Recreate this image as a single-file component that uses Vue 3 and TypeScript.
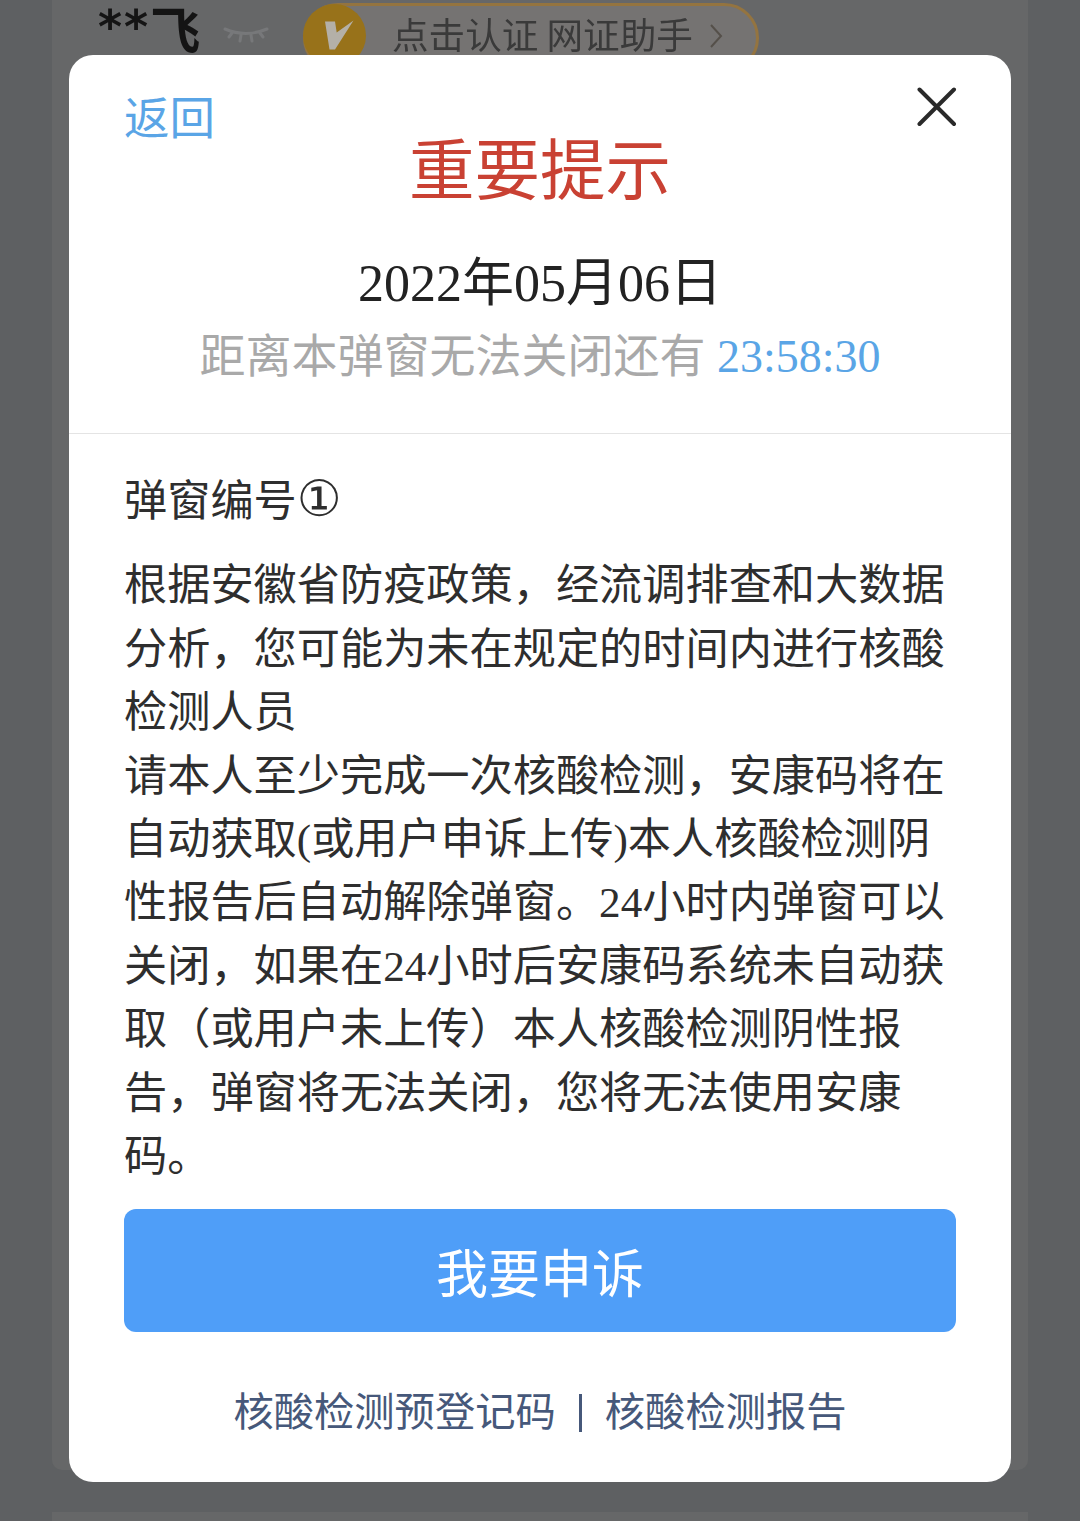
<script setup lang="ts">
const paragraphs: string[] = [
  '根据安徽省防疫政策，经流调排查和大数据分析，您可能为未在规定的时间内进行核酸检测人员',
  '请本人至少完成一次核酸检测，安康码将在自动获取(或用户申诉上传)本人核酸检测阴性报告后自动解除弹窗。24小时内弹窗可以关闭，如果在24小时后安康码系统未自动获取（或用户未上传）本人核酸检测阴性报告，弹窗将无法关闭，您将无法使用安康码。',
]
</script>

<template>
  <div class="page">
    <div class="panel">
      <div class="topbar">
        <span class="name"><span class="stars">**</span><span class="fei">飞</span></span>
        <svg class="eye" width="46" height="18" viewBox="0 0 46 18" fill="none" stroke="#77787a" stroke-width="3" stroke-linecap="round">
          <path d="M2 4 Q23 13 44 4" />
          <path d="M9 8 L6 12 M18 10 L17 16 M28 10 L29 16 M37 8 L40 12" />
        </svg>
        <div class="auth">
          <span class="badge">
            <svg width="63" height="63" viewBox="303 3 63 63">
              <path d="M325 20.5 L335 20.5 L336.7 31.5 L353.5 19.5 L335 48.5 L329.5 48.5 Z" fill="#b4b0a8" />
            </svg>
          </span>
          <span class="auth-text">点击认证 网证助手</span>
          <svg class="chev" width="14" height="26" viewBox="0 0 14 26" fill="none" stroke="#55504a" stroke-width="2">
            <path d="M2 2 L12 13 L2 24" />
          </svg>
        </div>
      </div>

      <div class="card">
        <div class="head">
          <a class="back">返回</a>
          <svg class="close" width="40" height="40" viewBox="0 0 40 40" fill="none" stroke="#2a2a2a" stroke-width="4" stroke-linecap="round">
            <path d="M2.5 2.5 L37 37 M37 2.5 L2.5 37" />
          </svg>
          <h1 class="title">重要提示</h1>
          <div class="date">2022年05月06日</div>
          <div class="count">距离本弹窗无法关闭还有 <span class="time">23:58:30</span></div>
        </div>

        <div class="body">
          <div class="code">弹窗编号<span class="num">①</span></div>
          <p v-for="(text, i) in paragraphs" :key="i" class="para">{{ text }}</p>
          <button class="appeal" type="button">我要申诉</button>
          <div class="links">
            <a class="link">核酸检测预登记码</a>
            <span class="sep"></span>
            <a class="link">核酸检测报告</a>
          </div>
        </div>
      </div>
      <div class="strip"></div>
    </div>
  </div>
</template>

<style>
html, body { margin: 0; background: #5e6062; }
</style>

<style scoped>
.page {
  width: 1080px;
  height: 1521px;
  overflow: hidden;
  background: #5e6062;
  font-family: "Liberation Serif", "Noto Sans CJK SC", sans-serif;
  display: flex;
  justify-content: center;
  align-items: flex-start;
}
.panel {
  width: 976px;
  height: 1470px;
  background: #666768;
  padding: 0 17px;
  box-sizing: border-box;
  border-radius: 0 0 10px 10px;
}
.topbar {
  height: 55px;
  display: flex;
  align-items: flex-start;
  padding-left: 29px;
  filter: blur(0.6px);
}
.name {
  color: #141414;
  width: 126px;
  height: 55px;
  flex: none;
  white-space: nowrap;
  display: flex;
  align-items: flex-start;
}
.stars {
  font-family: "DejaVu Sans", sans-serif;
  font-weight: 700;
  font-size: 46px;
  line-height: 46px;
  margin-top: 4px;
  letter-spacing: 2px;
}
.fei {
  font-family: "Noto Sans CJK SC", sans-serif;
  font-weight: 700;
  font-size: 50px;
  line-height: 54px;
}
.eye { margin: 25px 0 0 -1px; flex: none; }
.auth {
  flex: none;
  margin: 3px 0 0 34px;
  width: 456px;
  height: 70px;
  box-sizing: border-box;
  border: 3px solid #947440;
  border-radius: 35px;
  background: #757372;
  display: flex;
  align-items: center;
}
.badge {
  width: 63px;
  height: 63px;
  border-radius: 50%;
  background: #98721a;
  flex: none;
  display: flex;
  margin: -6px 0 0 -3px;
}
.auth-text {
  font-size: 36.6px;
  line-height: 36px;
  margin: -8px 0 0 26px;
  color: #3a3a3a;
  font-family: "Noto Sans CJK SC", sans-serif;
  white-space: nowrap;
}
.chev { margin: -4px 0 0 16px; flex: none; }

.card {
  width: 942px;
  height: 1427px;
  background: #fff;
  border-radius: 24px;
  box-sizing: border-box;
  display: flex;
  flex-direction: column;
  position: relative;
  z-index: 1;
}
.head {
  height: 379px;
  box-sizing: border-box;
  border-bottom: 1.5px solid #e4e4e4;
  padding-top: 37px;
  position: relative;
  text-align: center;
}
.back {
  position: absolute;
  left: 55px;
  top: 33px;
  font-size: 45.5px;
  line-height: 64px;
  color: #5aa5e6;
}
.close { position: absolute; left: 848px; top: 32px; }
.title {
  margin: 38px 0 0;
  font-size: 65.5px;
  line-height: 84px;
  font-weight: 400;
  color: #c94133;
}
.date {
  margin-top: 35px;
  font-size: 52px;
  line-height: 70px;
  color: #222;
}
.count {
  margin-top: 5px;
  font-size: 46px;
  line-height: 66px;
  color: #a9a9a9;
}
.time { color: #5aa5e6; }

.body {
  flex: 1;
  padding: 36px 55px 0;
  display: flex;
  flex-direction: column;
}
.code, .para {
  font-size: 43.2px;
  line-height: 63.4px;
  color: #2e2e2e;
}
.num {
  font-family: "DejaVu Sans", sans-serif;
  font-size: 50px;
  line-height: 1;
}
.code { margin-bottom: 21px; height: 63.4px; }
.para { margin: 0; }
.appeal {
  margin-top: 21px;
  height: 123px;
  border: 0;
  border-radius: 12px;
  background: #4f9ef8;
  color: #fff;
  font-family: "Noto Sans CJK SC", sans-serif;
  font-size: 52px;
  padding: 0;
}
.links {
  margin-top: 48px;
  display: flex;
  justify-content: center;
  align-items: center;
  color: #46587a;
  font-size: 40.3px;
  line-height: 66px;
}
.sep {
  width: 3px;
  height: 38px;
  background: #46587a;
  margin: 0 23px;
}
.strip {
  height: 9px;
  margin: 30px -17px 0;
  background: #666768;
}
</style>
